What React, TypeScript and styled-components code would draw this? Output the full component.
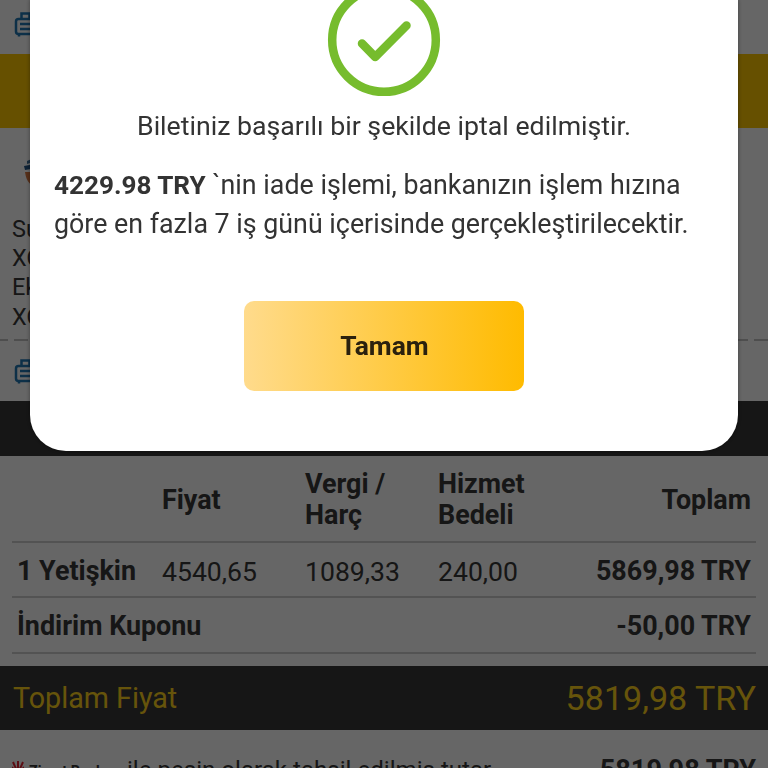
import React from "react";
import styled, { createGlobalStyle } from "styled-components";

const GlobalStyle = createGlobalStyle`
  * { box-sizing: border-box; }
  body {
    margin: 0;
    overflow: hidden;
    font-family: Roboto, "Liberation Sans", sans-serif;
    color: #373737;
    background: #fff;
  }
`;

const Page = styled.main`
  width: 768px;
  height: 768px;
  overflow: hidden;
  display: flex;
  flex-direction: column;
`;

const BaggageStrip = styled.div<{ $height: number; $pad: number }>`
  flex: none;
  height: ${(p) => p.$height}px;
  padding: ${(p) => p.$pad}px 0 0 13px;
`;

const GoldBar = styled.div`
  flex: none;
  height: 74px;
  background: #ffc800;
`;

const Flight = styled.section`
  flex: none;
  height: 213px;
  padding: 26px 0 0 12px;
  background: repeating-linear-gradient(
      90deg,
      #c4c4c4 0 8px,
      transparent 8px 14px,
      #c4c4c4 14px 20px
    )
    bottom / 100% 2px no-repeat;
`;

const CarrierLogo = styled.svg`
  display: block;
  margin-left: 11px;
  width: 24px;
  height: 35px;
`;

const FlightLine = styled.div`
  font-size: 23.5px;
  line-height: 29.2px;
  white-space: nowrap;
`;

const FlightLines = styled.div`
  margin-top: 26px;
`;

const DarkBar = styled.div`
  flex: none;
  height: 55px;
  background: #373737;
`;

const Fares = styled.section`
  flex: none;
  height: 210px;
  padding: 0 12px;
`;

const FareRow = styled.div<{ $height: number }>`
  display: grid;
  grid-template-columns: 145px 143px 133px 100px 1fr;
  align-items: center;
  height: ${(p) => p.$height}px;
  padding: 3px 5px 0;
  border-bottom: 2px solid #cfcfcf;
  font-size: 26.6px;
  line-height: 31px;
`;

const Cell = styled.div<{ $bold?: boolean; $end?: boolean; $span?: number }>`
  font-size: ${(p) => (p.$bold ? "26.9px" : "26.6px")};
  font-weight: ${(p) => (p.$bold ? 700 : 400)};
  text-align: ${(p) => (p.$end ? "right" : "left")};
  grid-column: span ${(p) => p.$span ?? 1};
  white-space: nowrap;
`;

const TotalBar = styled.div`
  flex: none;
  height: 64px;
  padding: 0 12px 0 13px;
  display: flex;
  align-items: center;
  justify-content: space-between;
  background: #373737;
  color: #ffd21c;
`;

const TotalLabel = styled.span`
  font-size: 28.7px;
`;

const TotalAmount = styled.span`
  font-size: 34.1px;
`;

const Payment = styled.div`
  flex: none;
  display: flex;
  align-items: flex-start;
  height: 60px;
  padding: 24px 12px 0;
  font-size: 24.1px;
  line-height: 32px;
  white-space: nowrap;
`;

const BankMark = styled.svg`
  width: 12px;
  height: 15px;
  margin-top: 6px;
`;

const BankName = styled.span`
  margin-left: 5px;
  width: 98px;
  font-size: 14.5px;
  font-weight: 700;
  line-height: 32px;
  padding-top: 2px;
`;

const PaymentAmount = styled.span`
  margin-left: auto;
  font-size: 27.1px;
  font-weight: 700;
`;

const Backdrop = styled.div`
  position: fixed;
  inset: 0;
  background: rgba(0, 0, 0, 0.6);
  display: flex;
  justify-content: center;
  align-items: flex-start;
`;

const Dialog = styled.div`
  width: 708px;
  height: 451.5px;
  margin-top: -1px;
  padding: 0 24px;
  border-radius: 0 0 36px 36px;
  background: #fff;
  color: #333;
  display: flex;
  flex-direction: column;
  align-items: center;
  box-shadow: 0 0 4px rgba(0, 0, 0, 0.4);
`;

const SuccessMark = styled.svg`
  flex: none;
  width: 116px;
  height: 116px;
  margin-top: -17px;
`;

const Headline = styled.p`
  margin: 9px 0 0;
  font-size: 26.7px;
  line-height: 38px;
  white-space: nowrap;
`;

const Message = styled.p`
  align-self: flex-start;
  margin: 21px 0 0;
  font-size: 26.8px;
  line-height: 39px;
  white-space: nowrap;
`;

const RefundAmount = styled.b`
  font-size: 26.1px;
`;

const Confirm = styled.button`
  flex: none;
  width: 280px;
  height: 90px;
  margin-top: 56.5px;
  padding-left: 7px;
  border: 0;
  border-radius: 10px;
  background: linear-gradient(90deg, #ffdb8c, #ffbb00);
  color: #2b210e;
  font-family: inherit;
  font-size: 26.4px;
  font-weight: 700;
`;

const Suitcase = () => (
  <svg width="25" height="26" viewBox="0 0 25 26" fill="none" stroke="#2278b5" strokeWidth="2.5" display="block">
    <rect x="3" y="7" width="19" height="15" rx="2.5" />
    <path d="M8.5 7V1.5h8V7M7 12h11M7 17h11M6 22v2.5M19 22v2.5" />
  </svg>
);

export default function App() {
  return (
    <>
      <GlobalStyle />
      <Page>
        <BaggageStrip $height={54} $pad={12}>
          <Suitcase />
        </BaggageStrip>
        <GoldBar />
        <Flight>
          <CarrierLogo viewBox="0 0 24 35">
            <path d="M4 7l9-4v4L4 10z" fill="#41719c" />
            <path d="M1 12q7-1 12-4v5q-6 3-11 3z" fill="#225485" />
            <path d="M2 18h14v15Q4 33 2 18z" fill="#d87840" />
          </CarrierLogo>
          <FlightLines>
            <FlightLine>Su</FlightLine>
            <FlightLine>XQ</FlightLine>
            <FlightLine>Ek</FlightLine>
            <FlightLine>XQ</FlightLine>
          </FlightLines>
        </Flight>
        <BaggageStrip $height={60} $pad={18}>
          <Suitcase />
        </BaggageStrip>
        <DarkBar />
        <Fares>
          <FareRow $height={87}>
            <Cell />
            <Cell $bold>Fiyat</Cell>
            <Cell $bold>
              Vergi /<br />
              Harç
            </Cell>
            <Cell $bold>
              Hizmet
              <br />
              Bedeli
            </Cell>
            <Cell $bold $end>
              Toplam
            </Cell>
          </FareRow>
          <FareRow $height={55}>
            <Cell $bold>1 Yetişkin</Cell>
            <Cell>4540,65</Cell>
            <Cell>1089,33</Cell>
            <Cell>240,00</Cell>
            <Cell $bold $end>
              5869,98 TRY
            </Cell>
          </FareRow>
          <FareRow $height={56}>
            <Cell $bold $span={4}>
              İndirim Kuponu
            </Cell>
            <Cell $bold $end>
              -50,00 TRY
            </Cell>
          </FareRow>
        </Fares>
        <TotalBar>
          <TotalLabel>Toplam Fiyat</TotalLabel>
          <TotalAmount>5819,98 TRY</TotalAmount>
        </TotalBar>
        <Payment>
          <BankMark viewBox="0 0 12 15" fill="none" stroke="#e52432" strokeWidth="2">
            <path d="M6 15V1M5 11L1 2M7 11l4-9M4 13L0 7M8 13l4-6" />
          </BankMark>
          <BankName>Ziraat Bankası</BankName>
          <span>ile peşin olarak tahsil edilmiş tutar</span>
          <PaymentAmount>5819,98 TRY</PaymentAmount>
        </Payment>
      </Page>
      <Backdrop>
        <Dialog role="dialog">
          <SuccessMark viewBox="0 0 116 116" fill="none" stroke="#76bc2d">
            <circle cx="58" cy="58" r="51.8" strokeWidth="8.5" />
            <path d="M36 61.5L49.2 75L80.5 43.5" strokeWidth="8.5" strokeLinecap="round" strokeLinejoin="round" />
          </SuccessMark>
          <Headline>Biletiniz başarılı bir şekilde iptal edilmiştir.</Headline>
          <Message>
            <RefundAmount>4229.98 TRY</RefundAmount> `nin iade işlemi, bankanızın işlem hızına
            <br />
            göre en fazla 7 iş günü içerisinde gerçekleştirilecektir.
          </Message>
          <Confirm>Tamam</Confirm>
        </Dialog>
      </Backdrop>
    </>
  );
}
